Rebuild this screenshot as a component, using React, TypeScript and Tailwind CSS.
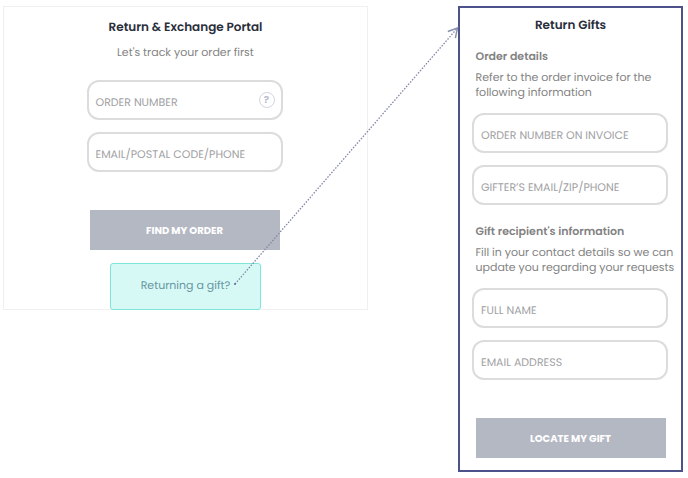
import type { ReactNode } from 'react'

type FieldProps = {
  id: string
  label: string
  type?: string
  children?: ReactNode
}

// The label lies inside the box and makes way once something is typed
function Field({ id, label, type = 'text', children }: FieldProps) {
  return (
    <div className="relative w-[196px]">
      <input
        id={id}
        type={type}
        placeholder=" "
        className="peer block h-10 w-full rounded-xl border-2 border-[#dcdcdd] bg-white px-2 pt-1 text-[11px] text-[#555] outline-none"
      />
      <label
        htmlFor={id}
        className="invisible absolute top-[14px] left-[9px] text-[11px] leading-4 whitespace-nowrap text-[#a1a1a4] peer-placeholder-shown:visible"
      >
        {label}
      </label>
      {children}
    </div>
  )
}

function SubmitButton({ children }: { children: ReactNode }) {
  return (
    <button
      type="submit"
      className="h-10 w-[190px] bg-[#b4b8c3] text-[10px] font-bold text-white"
    >
      {children}
    </button>
  )
}

function SectionIntro({ title, text }: { title: string; text: string }) {
  return (
    <div className="w-[190px] text-[#838383]">
      <h2 className="text-[11px] leading-4 font-semibold">{title}</h2>
      <p className="mt-[6px] text-[11px] leading-[15px] whitespace-pre">{text}</p>
    </div>
  )
}

// Dotted line from the gift link to the gift panel
function Connector() {
  return (
    <svg
      className="pointer-events-none absolute top-[21px] -right-[90px] z-10 h-[256px] w-[calc(50%+41px)] overflow-visible"
      aria-hidden="true"
    >
      <defs>
        <marker
          id="arrow"
          markerUnits="userSpaceOnUse"
          markerWidth="14"
          markerHeight="14"
          refX="11"
          refY="6"
          orient="auto"
        >
          <path d="M2 1 L11 6 L2 11" fill="none" stroke="#8b93b0" strokeWidth="1.5" />
        </marker>
      </defs>
      <line
        x1="0"
        y1="100%"
        x2="100%"
        y2="0"
        stroke="#7f85a5"
        strokeWidth="1.3"
        strokeDasharray="1.5 1.5"
        markerEnd="url(#arrow)"
      />
      <circle cx="0" cy="100%" r="1" fill="#5f7090" />
    </svg>
  )
}

function OrderPortal() {
  return (
    <section className="relative min-w-0 flex-1 border border-[#f0f0f0]">
      <form className="flex flex-col items-center pt-[13px]" onSubmit={(e) => e.preventDefault()}>
        <h1 className="text-[12px] leading-4 font-semibold text-[#292e3b]">
          Return &amp; Exchange Portal
        </h1>
        <p className="mt-2 text-[11px] leading-4 text-[#838383]">Let's track your order first</p>

        <div className="mt-5 flex flex-col gap-3 pr-[2px]">
          <Field id="order-number" label="ORDER NUMBER">
            <button
              type="button"
              aria-label="Where is my order number?"
              className="absolute top-3 right-2 flex size-4 items-center justify-center rounded-full border border-[#d3d4e2] text-[10px] leading-none font-semibold text-[#b6b7cb]"
            >
              ?
            </button>
          </Field>
          <Field id="order-contact" label="EMAIL/POSTAL CODE/PHONE" />
        </div>

        <div className="mt-[38px] pr-[2px]">
          <SubmitButton>FIND MY ORDER</SubmitButton>
        </div>

        <a
          href="#return-gifts"
          className="mt-[13px] -mb-px flex h-[47px] w-[151px] items-center justify-center rounded-[3px] border border-[#7ee5da] bg-[#d7f9f6] pb-[2px] text-[11px] text-[#68959f]"
        >
          Returning a gift?
        </a>
      </form>
      <Connector />
    </section>
  )
}

function GiftPanel() {
  return (
    <section id="return-gifts" className="w-[225px] shrink-0 border-2 border-[#4d528a]">
      <form
        className="flex flex-col items-center pt-[10px] pb-3"
        onSubmit={(e) => e.preventDefault()}
      >
        <h1 className="text-[12px] leading-4 font-semibold text-[#292e3b]">Return Gifts</h1>

        <div className="mt-[14px]">
          <SectionIntro
            title="Order details"
            text={'Refer to the order invoice for the\nfollowing information'}
          />
        </div>
        <div className="mt-[13px] flex flex-col gap-3 pr-px">
          <Field id="gift-order" label="ORDER NUMBER ON INVOICE" />
          <Field id="gifter-contact" label="GIFTER’S EMAIL/ZIP/PHONE" />
        </div>

        <div className="mt-[18px]">
          <SectionIntro
            title="Gift recipient's information"
            text={'Fill in your contact details so we can\nupdate you regarding your requests'}
          />
        </div>
        <div className="mt-[13px] flex flex-col gap-3 pr-px">
          <Field id="full-name" label="FULL NAME" />
          <Field id="email" label="EMAIL ADDRESS" type="email" />
        </div>

        <div className="mt-[38px]">
          <SubmitButton>LOCATE MY GIFT</SubmitButton>
        </div>
      </form>
    </section>
  )
}

export default function App() {
  return (
    <main className="flex items-start gap-[90px] bg-white pt-[6px] pr-[5px] pl-[3px] font-[Poppins,Inter,sans-serif] [text-rendering:geometricPrecision]">
      <OrderPortal />
      <GiftPanel />
    </main>
  )
}
